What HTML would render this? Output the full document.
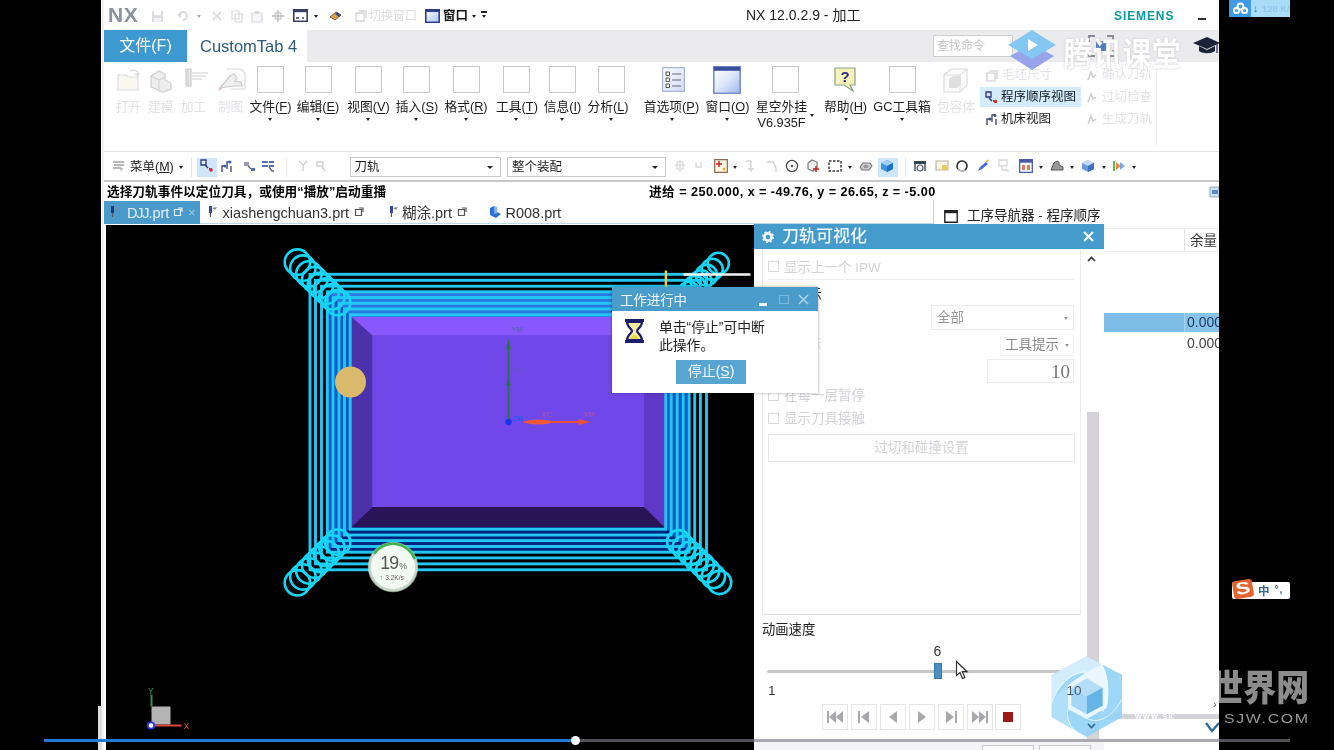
<!DOCTYPE html>
<html lang="zh-CN">
<head>
<meta charset="utf-8">
<title>NX 12.0.2.9 - 加工</title>
<style>
*{box-sizing:border-box;margin:0;padding:0}
html,body{width:1334px;height:750px;overflow:hidden;background:#000}
body{position:relative;filter:blur(.45px);font-family:"Liberation Sans","Noto Sans CJK SC",sans-serif;font-size:12px;color:#1a1a1a}
.abs{position:absolute}
#win{position:absolute;left:104px;top:0;width:1115px;height:750px;background:#fff;overflow:hidden}
#lstrip{position:absolute;left:100.5px;top:0;width:5px;height:750px;background:#f2f2f2}
/* title bar */
#title{position:absolute;left:0;top:0;width:1115px;height:30px;background:#fff}
#tabbar{position:absolute;left:0;top:30px;width:1115px;height:32px;background:#ebebed}
#ribbon{position:absolute;left:0;top:62px;width:1115px;height:89px;background:#fff}
#toolbar{position:absolute;left:0;top:151px;width:1115px;height:31px;background:#fff;border-top:1px solid #e4e4e4;border-bottom:2px solid #c9c9c9}
#status{position:absolute;left:0;top:182px;width:1115px;height:19px;background:#fff}
#doctabs{position:absolute;left:0;top:201px;width:1115px;height:23px;background:#fff}
#view{position:absolute;left:1.5px;top:224.5px;width:648.5px;height:526px;background:#000;overflow:hidden}

/* title */
#nx{position:absolute;left:4px;top:3px;font-weight:bold;font-size:21px;color:#8b939d;letter-spacing:0.5px;line-height:24px}
.fic{position:absolute;opacity:.22}
#title svg,#title .tris{margin-top:1px}
#ttl{position:absolute;left:642px;top:6px;font-size:14px;line-height:18px;color:#222;white-space:nowrap}
#siem{position:absolute;left:1010px;top:9px;font-size:12px;line-height:14px;font-weight:bold;color:#0b9a9c;letter-spacing:.9px}
#mini{position:absolute;left:1094px;top:18px;width:8px;height:2px;background:#333}
.tri{position:absolute;width:0;height:0;border-left:3px solid transparent;border-right:3px solid transparent;border-top:3px solid #222}
.tris{position:absolute;width:0;height:0;border-left:2.5px solid transparent;border-right:2.5px solid transparent;border-top:3px solid #222}
#ftab{position:absolute;left:0;top:0;width:83px;height:32px;background:#3d99cf;color:#fff;font-size:16px;line-height:31px;text-align:center}
#ctab{position:absolute;left:83px;top:0;width:120px;height:32px;background:#fff;color:#2b5c7c;font-size:16.5px;line-height:32px;padding-left:13px;white-space:nowrap}
#srch{position:absolute;left:829px;top:5px;width:80px;height:22px;background:#fff;border:1px solid #cfcfcf;color:#c4c4c4;font-size:12px;line-height:20px;padding-left:3px}
#txkt{position:absolute;left:1063.5px;top:33.5px;font-size:29px;line-height:38px;color:#fff;font-weight:700;white-space:nowrap;letter-spacing:.4px;text-shadow:0 0 2px #c0c0c8;transform:scaleY(1.12);transform-origin:0 0}

/* ribbon */
.rb{position:absolute;top:4px;width:27px;height:27px;border:1px solid #c9c9c9;background:#fff}
.rl{position:absolute;top:36px;font-size:12.75px;line-height:18px;color:#1c1c1c;white-space:nowrap;transform:translateX(-50%);text-align:center}
.rl u{text-decoration-thickness:1px;text-underline-offset:1.5px}
.rf{color:#e2e2e5}
.rt{position:absolute;top:56px;width:0;height:0;border-left:2.5px solid transparent;border-right:2.5px solid transparent;border-top:3px solid #222;margin-left:-2.5px}
.sm{position:absolute;font-size:12.5px;line-height:18px;white-space:nowrap;color:#1c1c1c}
.smf{color:#e4e4e8}

/* toolbar */
.dd{position:absolute;top:5px;height:20px;border:1px solid #c8c8c8;background:#fff;font-size:12.5px;line-height:18px;padding-left:4px;color:#1c1c1c}
.dd i{position:absolute;right:7px;top:8px;width:0;height:0;border-left:3px solid transparent;border-right:3px solid transparent;border-top:3.5px solid #222}
.tb{position:absolute;top:7px}
.tt{position:absolute;top:14px;width:0;height:0;border-left:2.5px solid transparent;border-right:2.5px solid transparent;border-top:3px solid #222}
.sel{position:absolute;top:6px;height:19px;background:#cfe6f8}
.vs{position:absolute;top:6px;width:1px;height:19px;background:#e6e6e6}
#status div{position:absolute;top:1px;font-weight:bold;font-size:12.7px;line-height:18px;color:#000;white-space:nowrap}
.dt{position:absolute;top:0;height:23px;font-size:14.5px;line-height:24px;color:#333;white-space:nowrap}

/* dialog */
#dlg{position:absolute;left:650px;top:224px;width:350px;height:526px;background:#fff}
#dlgh{position:absolute;left:0;top:0;width:350px;height:25px;background:#459bcb;color:#eaf4fb;font-size:17px;line-height:25px;font-weight:500;padding-left:28px;white-space:nowrap}
.dl{position:absolute;font-size:13.5px;line-height:18px;color:#d2d2d6;white-space:nowrap}
.cb{position:absolute;width:11px;height:11px;border:1px solid #dadade;background:#fff}
.fld{position:absolute;border:1px solid #ececee;background:#fff;color:#8a8a8e;font-size:14.5px;white-space:nowrap}
.pb{position:absolute;top:480px;width:26px;height:26px;border:1px solid #e6e6e8;background:#fff}
/* nav */
#nav{position:absolute;left:829px;top:200px;width:286px;height:550px;background:#fff;border-left:1px solid #d0d0d0}
/* progress */
#prog{position:absolute;left:508px;top:287px;width:206px;height:106px;background:#fff;box-shadow:0 0 3px rgba(0,0,0,.35)}
#progh{position:absolute;left:0;top:0;width:206px;height:24px;background:#4a9ccb;color:#f0f7fc;font-size:13.4px;line-height:27px;padding-left:8px;white-space:nowrap}
#stopb{position:absolute;left:64px;top:73px;width:70px;height:24px;background:#58a5d1;color:#f2f8fc;font-size:14px;line-height:23px;text-align:center}
</style>
</head>
<body>
<div id="lstrip"></div>
<div class="abs" style="left:97.500px;top:706px;width:4px;height:44px;background:#dcdcdc"></div>
<div id="win">
  <div id="title">
    <div id="nx">NX</div>
    <svg class="fic" style="left:47px;top:9px" width="13" height="13" viewBox="0 0 13 13"><path d="M1 1h11v11H1z" fill="#667"/><path d="M3 1h7v4H3z" fill="#fff"/><path d="M3 8h7v4H3z" fill="#ccd"/></svg>
    <svg class="fic" style="left:73px;top:9px" width="12" height="12" viewBox="0 0 12 12"><path d="M2 6a4 4 0 1 1 4 4" fill="none" stroke="#556" stroke-width="1.8"/><path d="M0 4l3 4 2-4z" fill="#556"/></svg>
    <div class="tris" style="left:93px;top:14px;opacity:.4"></div>
    <svg class="fic" style="left:107px;top:9px" width="12" height="12" viewBox="0 0 12 12"><path d="M2 2l8 8M10 2l-8 8" stroke="#556" stroke-width="1.6"/></svg>
    <svg class="fic" style="left:127px;top:9px" width="12" height="13" viewBox="0 0 12 13"><path d="M1 1h7v8H1zM4 4h7v8H4z" fill="#fff" stroke="#556" stroke-width="1.2"/></svg>
    <svg class="fic" style="left:147px;top:9px" width="12" height="13" viewBox="0 0 12 13"><path d="M1 3h10v9H1z" fill="#dde" stroke="#556" stroke-width="1.2"/><path d="M4 1h4v3H4z" fill="#556"/></svg>
    <svg class="fic" style="left:167px;top:8px;opacity:.4" width="14" height="14" viewBox="0 0 14 14"><path d="M7 1v12M1 7h12" stroke="#556" stroke-width="1.4"/><path d="M4 4h6v6H4z" fill="none" stroke="#556"/></svg>
    <svg class="abs" style="left:189px;top:8px" width="15" height="13" viewBox="0 0 15 13"><path d="M.8.8h13.4v11.4H.8z" fill="#fff" stroke="#3a3f66" stroke-width="1.6"/><path d="M.8.8h13.4v2.4H.8z" fill="#3a3f66"/><path d="M3 9h3M9 9h2" stroke="#3a3f66" stroke-width="1.5"/></svg>
    <div class="tris" style="left:210px;top:14px"></div>
    <svg class="abs" style="left:225px;top:9px" width="13" height="11" viewBox="0 0 13 11"><path d="M1 7l6-5 5 3-6 5z" fill="#d9a24a" stroke="#5a4a3a" stroke-width=".8"/><path d="M8 2l4 3-2 2-4-3z" fill="#3a4a8a"/></svg>
    <svg class="fic" style="left:251px;top:9px;opacity:.25" width="12" height="12" viewBox="0 0 12 12"><path d="M1 3h8v8H1z" fill="none" stroke="#556" stroke-width="1.3"/><path d="M4 1h7v7" fill="none" stroke="#556" stroke-width="1.3"/></svg>
    <div class="abs" style="left:265px;top:8px;font-size:12px;line-height:16px;color:#dcdce0;white-space:nowrap">切换窗口</div>
    <svg class="abs" style="left:321px;top:8px" width="15" height="14" viewBox="0 0 15 14"><defs><linearGradient id="wg" x1="0" y1="0" x2="1" y2="1"><stop offset="0" stop-color="#fff"/><stop offset="1" stop-color="#a8c4f0"/></linearGradient></defs><path d="M.8.8h13.4v12.4H.8z" fill="url(#wg)" stroke="#2f3f8f" stroke-width="1.6"/><path d="M.8.8h13.4v2.2H.8z" fill="#2f3f8f"/></svg>
    <div class="abs" style="left:339px;top:7.500px;font-size:12.500px;line-height:17px;color:#111;font-weight:bold;white-space:nowrap">窗口</div>
    <div class="tris" style="left:368px;top:14px"></div>
    <div class="abs" style="left:377px;top:11px;width:6px;height:1.5px;background:#222"></div>
    <div class="tris" style="left:377.5px;top:14px"></div>
    <div id="ttl">NX 12.0.2.9 - 加工</div>
    <div id="siem">SIEMENS</div>
    <div id="mini"></div>
  </div>
  <div id="tabbar">
    <div id="ftab">文件(F)</div>
    <div id="ctab">CustomTab 4</div>
    <div id="srch">查找命令</div>
    <svg class="abs" style="left:983px;top:4px" width="28" height="24" viewBox="0 0 28 24"><path d="M2 8V2h6M20 2h6v6M26 16v6h-6M8 22H2v-6" fill="none" stroke="#8a8a94" stroke-width="2"/><path d="M9 7h10v10H9z" fill="#4a7ab8"/></svg>
    <svg class="abs" style="left:1088px;top:6px" width="28" height="20" viewBox="0 0 28 20"><path d="M1 7l14-6 13 6-13 6z" fill="#1c2238"/><path d="M7 10v5c4 3 12 3 16 0v-5l-8 4z" fill="#1c2238"/><path d="M25 8v9" stroke="#5a4a8a" stroke-width="1.5"/></svg>
  </div>
  <div id="ribbon">
    <svg class="abs" style="left:12px;top:5px;opacity:.22" width="26" height="26" viewBox="0 0 26 26"><path d="M2 8h8l2 2h10v13H2z" fill="#e8e0c0" stroke="#666" stroke-width="1.2"/><path d="M14 4c4-2 8 0 9 3l-3 0 3 3" fill="none" stroke="#666" stroke-width="1.5"/></svg>
    <svg class="abs" style="left:44px;top:5px;opacity:.3" width="26" height="26" viewBox="0 0 26 26"><path d="M3 9l8-5 6 3v6l6 3v6l-8 3-12-5z" fill="#c8c8cc" stroke="#666" stroke-width="1.2"/><path d="M3 9l8 4v12M11 13l6-3" fill="none" stroke="#666" stroke-width="1"/></svg>
    <svg class="abs" style="left:78px;top:5px;opacity:.3" width="28" height="26" viewBox="0 0 28 26"><path d="M4 2h5v17H4z" fill="#bbb" stroke="#555" stroke-width="1.2"/><path d="M6 2v17" stroke="#555"/><path d="M10 6h16M10 9h14M10 12h10" stroke="#667" stroke-width="1.2"/></svg>
    <svg class="abs" style="left:113px;top:4px;opacity:.3" width="30" height="28" viewBox="0 0 30 28"><path d="M10 3h14l4 4v16H14" fill="#f4f4f4" stroke="#888" stroke-width="1.2"/><path d="M3 22l10-12 4-2 3 4-2 3 6 1 1 4-9 0z" fill="#ccc" stroke="#555" stroke-width="1.2"/><path d="M2 24l3-3" stroke="#a33" stroke-width="2"/></svg>
    <div class="rl rf" style="left:24.5px">打开</div>
    <div class="rl rf" style="left:56.5px">建模</div>
    <div class="rl rf" style="left:89.5px">加工</div>
    <div class="rl rf" style="left:126.5px">制图</div>
    <div class="rb" style="left:153px"></div>
    <div class="rl" style="left:166.5px">文件(<u>F</u>)</div>
    <div class="rt" style="left:166.5px"></div>
    <div class="rb" style="left:201px"></div>
    <div class="rl" style="left:214px">编辑(<u>E</u>)</div>
    <div class="rt" style="left:214.5px"></div>
    <div class="rb" style="left:251px"></div>
    <div class="rl" style="left:264.5px">视图(<u>V</u>)</div>
    <div class="rt" style="left:264.5px"></div>
    <div class="rb" style="left:299px"></div>
    <div class="rl" style="left:313px">插入(<u>S</u>)</div>
    <div class="rt" style="left:312.5px"></div>
    <div class="rb" style="left:348.5px"></div>
    <div class="rl" style="left:362px">格式(<u>R</u>)</div>
    <div class="rt" style="left:362.0px"></div>
    <div class="rb" style="left:399px"></div>
    <div class="rl" style="left:413px">工具(<u>T</u>)</div>
    <div class="rt" style="left:412.5px"></div>
    <div class="rb" style="left:445px"></div>
    <div class="rl" style="left:458.5px">信息(<u>I</u>)</div>
    <div class="rt" style="left:458.5px"></div>
    <div class="rb" style="left:494px"></div>
    <div class="rl" style="left:504px">分析(<u>L</u>)</div>
    <div class="rt" style="left:507.5px"></div>
    <svg class="abs" style="left:558px;top:5px" width="23" height="25" viewBox="0 0 23 25"><defs><linearGradient id="pg" x1="0" y1="0" x2="1" y2="1"><stop offset="0" stop-color="#fff"/><stop offset="1" stop-color="#d0daf4"/></linearGradient></defs><path d="M.6.6h21.8v23.8H.6z" fill="url(#pg)" stroke="#aab4d8" stroke-width="1.2"/><path d="M4 5h3.5v3.500H4zM4 11h3.500v3.500H4zM4 17h3.500v3.500H4z" fill="#fff" stroke="#555" stroke-width="1"/><path d="M10 7h9M10 13h9M10 19h9" stroke="#667" stroke-width="1.2"/></svg>
    <div class="rl" style="left:567.5px">首选项(<u>P</u>)</div>
    <div class="rt" style="left:568px"></div>
    <svg class="abs" style="left:609px;top:4px" width="28" height="28" viewBox="0 0 28 28"><defs><linearGradient id="wg2" x1="0" y1="0" x2="1" y2="1"><stop offset="0" stop-color="#fff"/><stop offset=".5" stop-color="#dfe8fa"/><stop offset="1" stop-color="#9ab8ee"/></linearGradient></defs><path d="M.8.8h26.400v26.400H.8z" fill="url(#wg2)" stroke="#7a8ed0" stroke-width="1.6"/><path d="M.8.8h26.400v4H.8z" fill="#3a4f9f"/></svg>
    <div class="rl" style="left:623.5px">窗口(<u>O</u>)</div>
    <div class="rt" style="left:623px"></div>
    <div class="rb" style="left:667.5px"></div>
    <div class="rl" style="left:677.5px">星空外挂</div>
    <div class="rl" style="left:677.5px;top:52px">V6.935F</div>
    <div class="rt" style="left:708px;top:52px"></div>
    <svg class="abs" style="left:730px;top:5px" width="24" height="26" viewBox="0 0 24 26"><path d="M1 1h20v17h-5l3 6-9-6H1z" fill="#f6f2b8" stroke="#8aa088" stroke-width="1.2"/><text x="11" y="15" font-family="Liberation Sans, sans-serif" font-weight="bold" font-size="15" fill="#2a2a8a" text-anchor="middle">?</text></svg>
    <div class="rl" style="left:741.5px">帮助(<u>H</u>)</div>
    <div class="rt" style="left:742px"></div>
    <div class="rb" style="left:784.5px"></div>
    <div class="rl" style="left:798px">GC工具箱</div>
    <div class="rt" style="left:798px"></div>
    <svg class="abs" style="left:838px;top:5px;opacity:.3" width="27" height="27" viewBox="0 0 27 27"><path d="M2 8l7-6h16v16l-7 7H2z" fill="#f4f4f4" stroke="#888" stroke-width="1.2"/><path d="M2 8h16v17M18 8l7-6" fill="none" stroke="#888"/><path d="M7 12l4-3h8v8l-4 4H7z" fill="#999"/></svg>
    <div class="rl rf" style="left:852px">包容体</div>
    <div class="abs" style="left:876px;top:25px;width:101px;height:20px;background:#d3ebfb"></div>
    <svg class="abs" style="left:882px;top:8px;opacity:.3" width="12" height="12" viewBox="0 0 12 12"><path d="M1 3h8v8H1zM3 1h8v8" fill="none" stroke="#556" stroke-width="1.2"/></svg>
    <div class="sm smf" style="left:898px;top:4px">毛坯尺寸</div>
    <svg class="abs" style="left:881px;top:29px" width="14" height="13" viewBox="0 0 14 13"><path d="M1 1h5v5H1z" fill="#dde" stroke="#2a3a7a" stroke-width="1.3"/><path d="M4 7l3 3M8 10h3" stroke="#2a3a7a" stroke-width="1.5"/><circle cx="10.500" cy="10.500" r="1.800" fill="#c33"/></svg>
    <div class="sm" style="left:897px;top:26px;color:#101820">程序顺序视图</div>
    <svg class="abs" style="left:881px;top:51px" width="14" height="13" viewBox="0 0 14 13"><path d="M2 12V6h3M7 9V2h3M11 12V6" fill="none" stroke="#4a4a6a" stroke-width="1.4"/><circle cx="5" cy="6" r="1.500" fill="#357"/><circle cx="10" cy="2.500" r="1.500" fill="#357"/></svg>
    <div class="sm" style="left:897px;top:48px">机床视图</div>
    <div class="sm smf" style="left:998px;top:3px">确认刀轨</div>
    <div class="sm smf" style="left:998px;top:26px">过切检查</div>
    <div class="sm smf" style="left:998px;top:48px">生成刀轨</div>
    <svg class="abs" style="left:982px;top:8px;opacity:.3" width="12" height="12" viewBox="0 0 12 12"><path d="M2 10l3-8 2 5 3-2" fill="none" stroke="#556" stroke-width="1.5"/></svg>
    <svg class="abs" style="left:982px;top:30px;opacity:.3" width="12" height="12" viewBox="0 0 12 12"><path d="M2 10l3-8 2 5 3-2" fill="none" stroke="#556" stroke-width="1.5"/></svg>
    <svg class="abs" style="left:982px;top:52px;opacity:.3" width="12" height="12" viewBox="0 0 12 12"><path d="M2 10l3-8 2 5 3-2" fill="none" stroke="#556" stroke-width="1.5"/></svg>
    <div class="abs" style="left:1052px;top:2px;width:1px;height:82px;background:#efeff1"></div>
  </div>
  <div id="toolbar">
    <svg class="tb" style="left:8px;opacity:0.8" width="14" height="14" viewBox="0 0 14 14"><path d="M1 3h11M2 6h10M1 9h8" stroke="#888" stroke-width="1.3"/><path d="M6 7l6 3-3 1 1 3z" fill="#aaa"/></svg>
    <div class="abs" style="left:26px;top:6px;font-size:12.5px;line-height:18px;white-space:nowrap;color:#222">菜单(<u>M</u>)</div>
    <div class="tt" style="left:75px"></div>
    <div class="vs" style="left:87px"></div>
    <div class="sel" style="left:93px;width:20px"></div>
    <svg class="tb" style="left:96px" width="14" height="14" viewBox="0 0 14 14"><path d="M1 1h5v5H1z" fill="#e8eefc" stroke="#2a3a8a" stroke-width="1.3"/><path d="M5 6l3 3M9 10h3" stroke="#2a3a8a" stroke-width="1.4"/><circle cx="11" cy="11" r="1.800" fill="#d24"/></svg>
    <svg class="tb" style="left:116px" width="14" height="14" viewBox="0 0 14 14"><path d="M2 13V7h3M7 10V3h3M11 13V7" fill="none" stroke="#4a4a7a" stroke-width="1.4"/><circle cx="5" cy="7" r="1.500" fill="#36a"/><circle cx="10" cy="3" r="1.500" fill="#36a"/></svg>
    <svg class="tb" style="left:138px;opacity:0.85" width="14" height="14" viewBox="0 0 14 14"><path d="M2 3h5v4H2z" fill="#88a" /><path d="M6 7l3 3" stroke="#446" stroke-width="1.300"/><path d="M9 9h4v3H9z" fill="#35a"/></svg>
    <svg class="tb" style="left:157px;opacity:0.85" width="14" height="14" viewBox="0 0 14 14"><path d="M1 3h6M8 3h5M1 7h6M8 7h5" stroke="#35a" stroke-width="2"/><path d="M8 8l3 4h2" stroke="#446" stroke-width="1.300" fill="none"/></svg>
    <div class="vs" style="left:182px"></div>
    <svg class="tb" style="left:193px;opacity:0.3" width="12" height="14" viewBox="0 0 12 14"><path d="M2 2l4 4 4-4M6 6v6" fill="none" stroke="#667" stroke-width="1.4"/></svg>
    <svg class="tb" style="left:211px;opacity:0.3" width="12" height="14" viewBox="0 0 12 14"><path d="M2 3h6v4H2zM7 8l3 4" fill="none" stroke="#667" stroke-width="1.4"/></svg>
    <div class="dd" style="left:245.500px;width:151px">刀轨<i></i></div>
    <div class="dd" style="left:403px;width:159px">整个装配<i></i></div>
    <svg class="tb" style="left:570px;opacity:0.22" width="12" height="14" viewBox="0 0 12 14"><path d="M6 1v12M1 6h10M3 3h6v7H3z" fill="none" stroke="#667" stroke-width="1.3"/></svg>
    <svg class="tb" style="left:590px;opacity:0.25" width="10" height="12" viewBox="0 0 10 12"><path d="M2 3v5h5V3" fill="none" stroke="#667" stroke-width="1.3"/></svg>
    <svg class="tb" style="left:610px" width="14" height="14" viewBox="0 0 14 14"><path d="M.7.7h12.600v12.600H.7z" fill="#fdf6e0" stroke="#8a6a4a" stroke-width="1.2"/><path d="M5 2v6M2 5h6" stroke="#c22" stroke-width="1.5"/><circle cx="10" cy="10" r="1.500" fill="#db4"/></svg>
    <div class="tt" style="left:629px"></div>
    <svg class="tb" style="left:640px;opacity:0.3" width="12" height="14" viewBox="0 0 12 14"><path d="M2 3c4-3 7 0 4 3M7 6v7M4 10h6" fill="none" stroke="#667" stroke-width="1.3"/></svg>
    <svg class="tb" style="left:662px;opacity:0.3" width="12" height="14" viewBox="0 0 12 14"><path d="M1 3h6l3 6v4" fill="none" stroke="#667" stroke-width="1.4"/></svg>
    <svg class="tb" style="left:681px" width="14" height="14" viewBox="0 0 14 14"><circle cx="7" cy="7" r="5.600" fill="#fff" stroke="#444" stroke-width="1.2"/><circle cx="7" cy="7" r="1.200" fill="#444"/></svg>
    <svg class="tb" style="left:702px" width="14" height="14" viewBox="0 0 14 14"><path d="M2 4l4-3 5 2v6l-4 3-5-2z" fill="#eee" stroke="#777" stroke-width="1.100"/><path d="M10 7v6M7 10h6" stroke="#c22" stroke-width="1.500"/></svg>
    <svg class="tb" style="left:724px" width="14" height="14" viewBox="0 0 14 14"><path d="M1 2h12v10H1z" fill="none" stroke="#333" stroke-width="1.400" stroke-dasharray="2.500 1.500"/></svg>
    <div class="tt" style="left:744px"></div>
    <svg class="tb" style="left:755px" width="14" height="14" viewBox="0 0 14 14"><path d="M1 8l3-4h7l2 3-3 4H3z" fill="#ccc" stroke="#777" stroke-width="1.100"/><ellipse cx="7" cy="7.500" rx="2.500" ry="1.800" fill="#999"/></svg>
    <div class="sel" style="left:774px;width:20px"></div>
    <svg class="tb" style="left:776px" width="14" height="14" viewBox="0 0 14 14"><path d="M1 4l6-3 6 3v6l-6 3-6-3z" fill="#3d93e0"/><path d="M1 4l6 3 6-3-6-3z" fill="#9cd0fa"/><path d="M7 7v6l6-3V4z" fill="#1f6fc4"/></svg>
    <div class="vs" style="left:801px"></div>
    <svg class="tb" style="left:809px" width="14" height="14" viewBox="0 0 14 14"><path d="M1 2h12v3H1z" fill="#345"/><path d="M2 5v7M12 5v7" stroke="#345" stroke-width="1.300"/><circle cx="7" cy="9" r="3" fill="none" stroke="#557" stroke-width="1.200"/></svg>
    <svg class="tb" style="left:831px" width="14" height="14" viewBox="0 0 14 14"><path d="M1 2h12v9H1z" fill="#fbf6e6" stroke="#b9b0a0" stroke-width="1.100"/><path d="M7 6h5v5H7z" fill="#e8c860"/></svg>
    <svg class="tb" style="left:851px" width="14" height="14" viewBox="0 0 14 14"><path d="M3 10a5 5 0 1 1 7 1" fill="none" stroke="#333" stroke-width="1.600"/><path d="M3 10a5 5 0 0 0 7 1" fill="none" stroke="#aaa" stroke-width="1.600"/></svg>
    <svg class="tb" style="left:872px" width="14" height="14" viewBox="0 0 14 14"><path d="M2 12l2-4 6-5 2 2-6 5z" fill="#4a6ad8"/><path d="M10 3l2-2" stroke="#da4" stroke-width="1.500"/></svg>
    <svg class="tb" style="left:893px;opacity:0.3" width="14" height="14" viewBox="0 0 14 14"><path d="M2 1h8v6H2zM5 7v4h6v2" fill="none" stroke="#778" stroke-width="1.300"/></svg>
    <svg class="tb" style="left:915px" width="14" height="14" viewBox="0 0 14 14"><path d="M.7.700h12.600v12.600H.7z" fill="#fff" stroke="#4a5aa8" stroke-width="1.300"/><path d="M.7.700h12.600v3H.7z" fill="#4a5aa8"/><path d="M3 6h3v5H3zM8 6h3v5H8z" fill="#e07a5a"/></svg>
    <div class="tt" style="left:935px"></div>
    <svg class="tb" style="left:946px" width="14" height="14" viewBox="0 0 14 14"><path d="M1 11l3-7c3-3 6-2 5 2l4 2v3z" fill="#999" stroke="#555" stroke-width="1"/></svg>
    <div class="tt" style="left:966px"></div>
    <svg class="tb" style="left:977px" width="14" height="14" viewBox="0 0 14 14"><path d="M1 4l6-3 6 3v6l-6 3-6-3z" fill="#6a9ae0"/><path d="M1 4l6 3 6-3-6-3z" fill="#c4dcf8"/><path d="M7 7v6l6-3V4z" fill="#3f6fc0"/></svg>
    <div class="tt" style="left:998px"></div>
    <svg class="tb" style="left:1008px" width="14" height="14" viewBox="0 0 14 14"><path d="M2 2v10" stroke="#2a2" stroke-width="1.500"/><path d="M4 3l5 4-5 4z" fill="#e84"/><path d="M8 3l5 4-5 4z" fill="#59d" opacity=".8"/></svg>
    <div class="tt" style="left:1028px"></div>
  </div>
  <div id="status">
    <div style="left:3px">选择刀轨事件以定位刀具，或使用“播放”启动重播</div>
    <div style="left:545px;letter-spacing:.42px">进给 = 250.000, x = -49.76, y = 26.65, z = -5.00</div>
    <svg class="abs" style="left:1105px;top:4px" width="10" height="12" viewBox="0 0 10 12"><path d="M1 1h9v10H1z" fill="#cfe0f4" stroke="#9ab" stroke-width="1"/><path d="M3 4h6v4H3z" fill="#5a8ac8"/></svg>
  </div>
  <div id="doctabs">
    <div class="abs" style="left:0;top:22px;width:830px;height:1px;background:#b9d9ee"></div>
    <div class="dt" style="left:0;width:96px;background:#4a9bcb;color:#e6f2fb"></div>
    <svg class="abs" style="left:4px;top:4px" width="12" height="14" viewBox="0 0 12 14"><path d="M3 1h3v7H3z" fill="#27357a"/><path d="M6 3l5-1-2 3z" fill="#8a8a9a"/><path d="M4.500 8v4" stroke="#555" stroke-width="1.200"/></svg>
    <div class="dt" style="left:23px;color:#e4f0fa"><span style="letter-spacing:-1.2px">DJJ</span>.prt</div>
    <svg class="abs" style="left:69px;top:6px" width="10" height="10" viewBox="0 0 10 10"><path d="M1.500 2.500h6v6h-6z" fill="none" stroke="#e8f2fa" stroke-width="1.200"/><path d="M5 1h4v4" fill="none" stroke="#e8f2fa" stroke-width="1.200"/></svg>
    <div class="dt" style="left:84px;color:#9fc8e4;font-size:13px">×</div>
    <svg class="abs" style="left:102px;top:4px" width="12" height="14" viewBox="0 0 12 14"><path d="M3 1h3v7H3z" fill="#3a4a9a"/><path d="M6 3l5-1-2 3z" fill="#8a8a9a"/><path d="M4.500 8v4" stroke="#555" stroke-width="1.200"/></svg>
    <div class="dt" style="left:118.500px">xiashengchuan3.prt</div>
    <svg class="abs" style="left:250px;top:6px" width="10" height="10" viewBox="0 0 10 10"><path d="M1.500 2.500h6v6h-6z" fill="none" stroke="#555" stroke-width="1.200"/><path d="M5 1h4v4" fill="none" stroke="#555" stroke-width="1.200"/></svg>
    <svg class="abs" style="left:283px;top:4px" width="12" height="14" viewBox="0 0 12 14"><path d="M3 1h3v7H3z" fill="#3a4a9a"/><path d="M6 3l5-1-2 3z" fill="#8a8a9a"/><path d="M4.500 8v4" stroke="#555" stroke-width="1.200"/></svg>
    <div class="dt" style="left:298px">糊涂.prt</div>
    <svg class="abs" style="left:353px;top:6px" width="10" height="10" viewBox="0 0 10 10"><path d="M1.500 2.500h6v6h-6z" fill="none" stroke="#555" stroke-width="1.200"/><path d="M5 1h4v4" fill="none" stroke="#555" stroke-width="1.200"/></svg>
    <svg class="abs" style="left:385px;top:4px" width="13" height="14" viewBox="0 0 13 14"><path d="M1 3l4-2v7l3-1 4 2-5 4-6-3z" fill="#2f6fd8"/><path d="M5 1l3 1v6l-3 1z" fill="#7ab0f4"/></svg>
    <div class="dt" style="left:401.500px">R008.prt</div>
  </div>
  <div id="view">
<svg class="abs" style="left:0;top:0" width="648.5" height="526" viewBox="105.500 224.500 648.500 526">
<path d="M326.8 291.3H688.7L664 316.5H351z" fill="#2a78e2"/>
<path d="M326.8 291.3L351 316.5V526.5L326.8 551.7z" fill="#0b5cc6"/>
<path d="M688.7 291.3L664 316.5V526.5L688.7 551.7z" fill="#0b5cc6"/>
<path d="M326.8 551.7L351 526.5H664L688.7 551.7z" fill="#00257c"/>
<path d="M351 316.500H664V526.500H351z" fill="#6a44d6"/>
<path d="M351 316.500H664L643.500 335H372z" fill="#8858fc"/>
<path d="M351 316.500L372 335V506.500L351 526.500z" fill="#4c32aa"/>
<path d="M664 316.500L643.500 335V506.500L664 526.500z" fill="#6038c8"/>
<path d="M351 526.500L372 506.500H643.500L664 526.500z" fill="#2a1458"/>
<path d="M372 335H643.500V506.500H372z" fill="#7048ea"/>
<rect x="309.5" y="273.8" width="396.5" height="295.5" fill="none" stroke="#24c6f4" stroke-width="2.9"/>
<rect x="315" y="279.8" width="384.9" height="283.6" fill="none" stroke="#24c6f4" stroke-width="2.9"/>
<rect x="321" y="285.7" width="373.2" height="271.7" fill="none" stroke="#24c6f4" stroke-width="2.9"/>
<rect x="326.8" y="291.3" width="361.9" height="260.4" fill="none" stroke="#24c6f4" stroke-width="2.9"/>
<rect x="332.5" y="297" width="350.2" height="249.0" fill="none" stroke="#24c6f4" stroke-width="2.9"/>
<rect x="338.5" y="302.8" width="338.2" height="237.3" fill="none" stroke="#24c6f4" stroke-width="2.9"/>
<rect x="344" y="308.5" width="326.7" height="226.0" fill="none" stroke="#24c6f4" stroke-width="2.9"/>
<rect x="349.7" y="314.2" width="315.5" height="214.5" fill="none" stroke="#24c6f4" stroke-width="2.9"/>
<circle cx="296.9" cy="261.6" r="12.7" fill="none" stroke="#14d6f7" stroke-width="2.6"/>
<circle cx="302.4" cy="267.6" r="12.7" fill="none" stroke="#14d6f7" stroke-width="2.6"/>
<circle cx="308.4" cy="273.5" r="12.7" fill="none" stroke="#14d6f7" stroke-width="2.6"/>
<circle cx="314.2" cy="279.1" r="12.7" fill="none" stroke="#14d6f7" stroke-width="2.6"/>
<circle cx="319.9" cy="284.8" r="12.7" fill="none" stroke="#14d6f7" stroke-width="2.6"/>
<circle cx="325.9" cy="290.6" r="12.7" fill="none" stroke="#14d6f7" stroke-width="2.6"/>
<circle cx="331.4" cy="296.3" r="12.7" fill="none" stroke="#14d6f7" stroke-width="2.6"/>
<circle cx="337.1" cy="302.0" r="12.7" fill="none" stroke="#14d6f7" stroke-width="2.6"/>
<circle cx="717.8" cy="262.8" r="10.6" fill="none" stroke="#14d6f7" stroke-width="2.6"/>
<circle cx="711.7" cy="268.8" r="10.6" fill="none" stroke="#14d6f7" stroke-width="2.6"/>
<circle cx="706.0" cy="274.7" r="10.6" fill="none" stroke="#14d6f7" stroke-width="2.6"/>
<circle cx="700.5" cy="280.3" r="10.6" fill="none" stroke="#14d6f7" stroke-width="2.6"/>
<circle cx="694.5" cy="286.0" r="10.6" fill="none" stroke="#14d6f7" stroke-width="2.6"/>
<circle cx="688.5" cy="291.8" r="10.6" fill="none" stroke="#14d6f7" stroke-width="2.6"/>
<circle cx="682.5" cy="297.5" r="10.6" fill="none" stroke="#14d6f7" stroke-width="2.6"/>
<circle cx="677.0" cy="303.2" r="10.6" fill="none" stroke="#14d6f7" stroke-width="2.6"/>
<circle cx="296.9" cy="582.3" r="12.7" fill="none" stroke="#14d6f7" stroke-width="2.6"/>
<circle cx="302.4" cy="576.4" r="12.7" fill="none" stroke="#14d6f7" stroke-width="2.6"/>
<circle cx="308.4" cy="570.4" r="12.7" fill="none" stroke="#14d6f7" stroke-width="2.6"/>
<circle cx="314.2" cy="564.7" r="12.7" fill="none" stroke="#14d6f7" stroke-width="2.6"/>
<circle cx="319.9" cy="559.0" r="12.7" fill="none" stroke="#14d6f7" stroke-width="2.6"/>
<circle cx="325.9" cy="553.1" r="12.7" fill="none" stroke="#14d6f7" stroke-width="2.6"/>
<circle cx="331.4" cy="547.5" r="12.7" fill="none" stroke="#14d6f7" stroke-width="2.6"/>
<circle cx="337.1" cy="541.7" r="12.7" fill="none" stroke="#14d6f7" stroke-width="2.6"/>
<circle cx="719.0" cy="581.9" r="11.7" fill="none" stroke="#14d6f7" stroke-width="2.6"/>
<circle cx="712.9" cy="576.0" r="11.7" fill="none" stroke="#14d6f7" stroke-width="2.6"/>
<circle cx="707.2" cy="570.0" r="11.7" fill="none" stroke="#14d6f7" stroke-width="2.6"/>
<circle cx="701.7" cy="564.3" r="11.7" fill="none" stroke="#14d6f7" stroke-width="2.6"/>
<circle cx="695.7" cy="558.6" r="11.7" fill="none" stroke="#14d6f7" stroke-width="2.6"/>
<circle cx="689.7" cy="552.7" r="11.7" fill="none" stroke="#14d6f7" stroke-width="2.6"/>
<circle cx="683.7" cy="547.1" r="11.7" fill="none" stroke="#14d6f7" stroke-width="2.6"/>
<circle cx="678.2" cy="541.3" r="11.7" fill="none" stroke="#14d6f7" stroke-width="2.6"/>
<path d="M683 274H750" stroke="#f4f4f4" stroke-width="2.6"/>
<path d="M665.400 270V288" stroke="#e8d23a" stroke-width="2.4"/>
<circle cx="350" cy="381.500" r="15.500" fill="#d9b96c"/>
<path d="M508 420V344" stroke="#2f6f50" stroke-width="2"/><path d="M505.500 349L508 338l2.500 11zM505.500 385L508 376l2.500 9z" fill="#2f6f50"/>
<text x="511" y="331" font-size="7.500" fill="#4a6a8a" font-family="Liberation Sans, sans-serif">YM</text>
<text x="513" y="372" font-size="7.500" fill="#5a5aa8" font-family="Liberation Sans, sans-serif">YC</text>
<path d="M523 421.500H585" stroke="#e8503a" stroke-width="2"/><path d="M578 418.500l12 3-12 3z" fill="#e8503a"/>
<ellipse cx="538" cy="421.500" rx="13" ry="2.400" fill="#f05a3a"/>
<text x="541" y="416" font-size="7.500" fill="#c8508a" font-family="Liberation Sans, sans-serif">XC</text>
<text x="583" y="416" font-size="7.500" fill="#c8508a" font-family="Liberation Sans, sans-serif">XM</text>
<circle cx="508" cy="421.500" r="3.200" fill="#1a34e8"/>
<text x="512" y="420" font-size="7.500" font-weight="bold" fill="#2a5af0" font-family="Liberation Sans, sans-serif">ZM</text>
<path d="M151 706H170V724H151z" fill="#b4b4b4"/>
<path d="M151 706V694" stroke="#3a8a4a" stroke-width="2"/>
<text x="147.500" y="693" font-size="8.500" fill="#3a9a5a" font-family="Liberation Sans, sans-serif">Y</text>
<path d="M152 725H181" stroke="#e04a3a" stroke-width="2"/>
<text x="183" y="728.500" font-size="8.500" fill="#e0503a" font-family="Liberation Sans, sans-serif">X</text>
<circle cx="150.500" cy="725" r="3.200" fill="#fff" stroke="#2a3ae0" stroke-width="1.800"/>
</svg>
</div>
  <div id="nav">
    <svg class="abs" style="left:10px;top:10px" width="14" height="13" viewBox="0 0 14 13"><path d="M.8.800h12.400v11.400H.8z" fill="#fff" stroke="#222" stroke-width="1.400"/><path d="M.8.800h12.400v2.400H.8z" fill="#222"/></svg>
    <div class="abs" style="left:33px;top:7px;font-size:13.500px;line-height:18px;color:#222;white-space:nowrap">工序导航器 - 程序顺序</div>
    <div class="abs" style="left:170px;top:28px;width:116px;height:1px;background:#ececec"></div>
    <div class="abs" style="left:170px;top:51px;width:116px;height:1px;background:#ececec"></div>
    <div class="abs" style="left:250px;top:29px;width:1px;height:22px;background:#e4e4e4"></div>
    <div class="abs" style="left:256px;top:32px;font-size:13.500px;line-height:18px;color:#333;white-space:nowrap">余量</div>
    <div class="abs" style="left:170px;top:112.500px;width:116px;height:19px;background:#7dbde6"></div>
    <div class="abs" style="left:250px;top:112.500px;width:36px;height:19px;background:#88c4ea;border-left:1px solid #a4d2f0"></div>
    <div class="abs" style="left:253px;top:113px;font-size:14px;line-height:18px;color:#1a3a5a;white-space:nowrap">0.000</div>
    <div class="abs" style="left:253px;top:133.500px;font-size:14px;line-height:18px;color:#444;white-space:nowrap">0.000</div>
    <div class="abs" style="left:171px;top:513.500px;width:115px;height:5px;background:#d4d4d8;overflow:hidden;color:#fff;font-size:7px;line-height:5px;letter-spacing:1.500px;font-weight:bold;white-space:nowrap;padding-left:30px">WWW.SK</div>
    <div class="abs" style="left:279px;top:498px;font-size:11px;color:#555;line-height:12px">›</div>
    <svg class="abs" style="left:271px;top:522px" width="15" height="11" viewBox="0 0 15 11"><path d="M1 1l6 8 7-8" fill="none" stroke="#2a6a9a" stroke-width="2.200"/></svg>
  </div>
  <div id="dlg">
    <div id="dlgh">刀轨可视化</div>
    <svg class="abs" style="left:8px;top:7px" width="12" height="12" viewBox="0 0 12 12"><circle cx="6" cy="6" r="3.600" fill="none" stroke="#eef6fc" stroke-width="2.600"/><circle cx="6" cy="6" r="5.300" fill="none" stroke="#eef6fc" stroke-width="1.600" stroke-dasharray="2 2.160"/></svg>
    <svg class="abs" style="left:329px;top:7px" width="11" height="11" viewBox="0 0 11 11"><path d="M1 1l9 9M10 1l-9 9" stroke="#f4f9fd" stroke-width="2.200"/></svg>
    <div class="abs" style="left:8px;top:25px;width:1px;height:366px;background:#e9e9eb"></div>
    <div class="abs" style="left:8px;top:390px;width:319px;height:1px;background:#e2e2e4"></div>
    <div class="abs" style="left:326px;top:25px;width:1px;height:366px;background:#ececee"></div>
    <div class="cb" style="left:14px;top:37px"></div><div class="dl" style="left:30px;top:35px">显示上一个 IPW</div>
    <div class="abs" style="left:14px;top:55px;width:306px;height:1px;background:#ededef"></div>
    <div class="dl" style="left:14px;top:62px;color:#333">刀具显示</div>
    <div class="fld" style="left:177px;top:81px;width:143px;height:25px;line-height:23px;padding-left:5px;font-size:13.500px;color:#999">全部</div>
    <div class="tris" style="left:310px;top:93px;opacity:.45"></div>
    <div class="dl" style="left:14px;top:112px;color:#e2e2e4">运动显示</div>
    <div class="fld" style="left:246px;top:110px;width:74px;height:22px;line-height:20px;padding-left:4px;font-size:13.500px;border-color:#f4f4f6">工具提示</div>
    <div class="tris" style="left:311px;top:120px;opacity:.45"></div>
    <div class="fld" style="left:233px;top:135px;width:87px;height:24px;line-height:23px;text-align:right;padding-right:3px;font-family:'Liberation Serif','Noto Serif CJK SC',serif;font-size:19px;color:#777">10</div>
    <div class="cb" style="left:14px;top:166px"></div><div class="dl" style="left:30px;top:163px">在每一层暂停</div>
    <div class="cb" style="left:14px;top:189px"></div><div class="dl" style="left:30px;top:186px">显示刀具接触</div>
    <div class="fld" style="left:14px;top:210px;width:307px;height:28px;line-height:26px;text-align:center;color:#d4d4d8;font-size:13.500px;border-color:#e6e6e8">过切和碰撞设置</div>
    <div class="abs" style="left:330px;top:25px;width:15px;height:501px;background:#fff"></div>
    <svg class="abs" style="left:333px;top:32px" width="9" height="6" viewBox="0 0 9 6"><path d="M1 5l3.500-3.500L8 5" fill="none" stroke="#333" stroke-width="1.600"/></svg>
    <div class="abs" style="left:332.500px;top:188px;width:12.500px;height:327px;background:#d5d3d8"></div>
    <div class="abs" style="left:8px;top:396.500px;font-size:13.300px;line-height:18px;color:#222;white-space:nowrap">动画速度</div>
    <div class="abs" style="left:179.500px;top:418.500px;font-size:14px;line-height:16px;color:#333">6</div>
    <div class="abs" style="left:13px;top:445.500px;width:307px;height:3px;background:#c6c6c6;border-radius:1.500px"></div>
    <div class="abs" style="left:180px;top:438.500px;width:8px;height:16px;background:#4a8ec2;border:1px solid #3a78aa"></div>
    <div class="abs" style="left:14px;top:459px;font-size:13.500px;line-height:16px;color:#333">1</div>
    <div class="pb" style="left:68px"><svg width="26" height="26" viewBox="0 0 26 26" style="position:absolute;left:-1px;top:-1px"><path d="M6 7v12" stroke="#a8a8ac" stroke-width="2"/><path d="M14 7v12l-7-6zM21 7v12l-7-6z" fill="#a8a8ac"/></svg></div>
    <div class="pb" style="left:97px"><svg width="26" height="26" viewBox="0 0 26 26" style="position:absolute;left:-1px;top:-1px"><path d="M8 7v12" stroke="#a8a8ac" stroke-width="2"/><path d="M18 7v12l-8-6z" fill="#a8a8ac"/></svg></div>
    <div class="pb" style="left:126px"><svg width="26" height="26" viewBox="0 0 26 26" style="position:absolute;left:-1px;top:-1px"><path d="M17 7v12l-8-6z" fill="#a8a8ac"/></svg></div>
    <div class="pb" style="left:155px"><svg width="26" height="26" viewBox="0 0 26 26" style="position:absolute;left:-1px;top:-1px"><path d="M9 7v12l8-6z" fill="#a8a8ac"/></svg></div>
    <div class="pb" style="left:184px"><svg width="26" height="26" viewBox="0 0 26 26" style="position:absolute;left:-1px;top:-1px"><path d="M18 7v12" stroke="#a8a8ac" stroke-width="2"/><path d="M8 7v12l8-6z" fill="#a8a8ac"/></svg></div>
    <div class="pb" style="left:213px"><svg width="26" height="26" viewBox="0 0 26 26" style="position:absolute;left:-1px;top:-1px"><path d="M20 7v12" stroke="#a8a8ac" stroke-width="2"/><path d="M5 7v12l7-6zM12 7v12l7-6z" fill="#a8a8ac"/></svg></div>
    <div class="pb" style="left:241px"><svg width="26" height="26" viewBox="0 0 26 26" style="position:absolute;left:-1px;top:-1px"><path d="M8 8h10v10H8z" fill="#a01818"/></svg></div>
    <div class="abs" style="left:0;top:514.500px;width:470px;height:3.500px;background:#c4c4c8"></div>
    <div class="abs" style="left:0;top:518px;width:350px;height:8px;background:#f4f4f6"></div>
    <div class="abs" style="left:228px;top:521px;width:52px;height:10px;border:1px solid #c8c8cc;background:#fafafa"></div>
    <div class="abs" style="left:284.500px;top:521px;width:52px;height:10px;border:1px solid #c8c8cc;background:#fafafa"></div>
    <svg class="abs" style="left:201px;top:436px" width="14" height="20" viewBox="0 0 14 20"><path d="M1.500 1.500v14l3.500-3 2.500 6 2.400-1-2.600-5.800h4.700z" fill="#fff" stroke="#333" stroke-width="1.200"/></svg>
  </div>
  <div id="prog">
    <div id="progh">工作进行中</div>
    <div class="abs" style="left:147px;top:16px;width:8px;height:2.500px;background:#f4f9fd"></div>
    <div class="abs" style="left:167px;top:8px;width:10px;height:9px;border:1px solid #7ab8dc"></div>
    <svg class="abs" style="left:186px;top:7px" width="11" height="11" viewBox="0 0 11 11"><path d="M1 1l9 9M10 1l-9 9" stroke="#a8d0e8" stroke-width="1.600"/></svg>
    <svg class="abs" style="left:12px;top:31px" width="21" height="26" viewBox="0 0 21 26"><path d="M1 1h19v3H1zM1 22h19v3H1z" fill="#1c1c6c"/><path d="M3 4h15c0 5-5 7-5 9s5 4 5 9H3c0-5 5-7 5-9s-5-4-5-9z" fill="#f4ec9a" stroke="#1c1c6c" stroke-width="2.200"/><path d="M6 21c1-3 3-4 4.500-4s3.500 1 4.500 4z" fill="#e8d84a"/></svg>
    <div class="abs" style="left:47px;top:31.500px;font-size:13.800px;line-height:18.300px;color:#222;white-space:nowrap">单击“停止”可中断<br>此操作。</div>
    <div id="stopb">停止(<u>S</u>)</div>
  </div>
  <svg class="abs" style="left:263.300px;top:541.100px" width="52" height="52" viewBox="0 0 50 50">
    <circle cx="25" cy="25" r="24.200" fill="#b9d8c0" opacity=".75"/>
    <circle cx="25" cy="25" r="22.300" fill="#f3faf4" stroke="#c9d6cb" stroke-width="2.200"/>
    <path d="M6.73 12.21A22.300 22.300 0 0 1 45.96 17.37" fill="none" stroke="#3db54c" stroke-width="2.400"/>
    <text x="21.500" y="26.500" text-anchor="middle" font-family="Liberation Sans, sans-serif" font-size="17" fill="#565656" letter-spacing="-.8">19</text>
    <text x="31" y="26.500" font-family="Liberation Sans, sans-serif" font-size="8.500" fill="#565656">%</text>
    <text x="12" y="37.300" font-family="Liberation Sans, sans-serif" font-size="6.500" fill="#3a9a5a">↑</text>
    <text x="17.500" y="37.300" font-family="Liberation Sans, sans-serif" font-size="6.300" fill="#6a5a5a">3.2K/s</text>
  </svg>
</div>
<!-- overlays -->
<svg class="abs" style="left:1007px;top:29px" width="50" height="42" viewBox="0 0 50 42"><path d="M3 27l22-12 22 12-22 14z" fill="#97a4ea"/><path d="M1 16L25 1l24 15-24 14z" fill="#84c7f2"/><path d="M21 10v12l10-6z" fill="#fff"/></svg>
<div id="txkt">腾讯课堂</div>
<div class="abs" style="left:1229px;top:0;width:61px;height:17px;background:#a9dcf6;overflow:hidden">
  <div class="abs" style="left:0;top:0;width:22px;height:17px;background:#3f9be6"></div>
  <svg class="abs" style="left:3px;top:2px" width="17" height="13" viewBox="0 0 17 13"><circle cx="8.500" cy="4.500" r="2.900" fill="none" stroke="#fff" stroke-width="2"/><circle cx="4.500" cy="8.500" r="2.600" fill="none" stroke="#fff" stroke-width="2"/><circle cx="12.500" cy="8.500" r="2.600" fill="none" stroke="#fff" stroke-width="2"/></svg>
  <div class="abs" style="left:24px;top:1px;font-size:10.500px;line-height:14px;color:#3a7ad0;font-weight:bold">↓</div>
  <div class="abs" style="left:33px;top:2px;font-size:9.500px;line-height:14px;color:#8cc0e8;white-space:nowrap">128 K/s</div>
</div>
<div class="abs" style="left:1232px;top:581.500px;width:58px;height:17px;background:#fff;border-radius:2px"></div>
<div class="abs" style="left:1232.500px;top:580px;width:20px;height:18px;background:#e4632c;border-radius:3px;transform:rotate(-9deg)"><div style="color:#fff;font-weight:bold;font-size:17px;line-height:18px;text-align:center;transform:scaleX(1.3)">S</div></div>
<div class="abs" style="left:1258px;top:583.500px;font-size:11.500px;line-height:14px;font-weight:bold;color:#346a9e;white-space:nowrap">中</div>
<div class="abs" style="left:1274.500px;top:583px;font-size:10px;line-height:14px;font-weight:bold;color:#4a6a8a;white-space:nowrap;letter-spacing:1px">°,</div>
<div class="abs" style="left:1199px;top:663.500px;font-size:36.500px;line-height:50px;font-weight:900;color:#8c8c8c;white-space:nowrap;transform:scaleX(.9);transform-origin:100% 0;width:110px;text-align:right;clip-path:inset(0 0 0 10px)">世界网</div>
<div class="abs" style="left:1224px;top:712px;font-size:12.500px;line-height:15px;color:#9a9a9a;white-space:nowrap;letter-spacing:1.300px;transform:scaleX(1.270);transform-origin:0 0">SJW.COM</div>
<svg class="abs" style="left:1040px;top:645px" width="100" height="100" viewBox="0 0 750 750">
  <path d="M350 85L615 225V540L350 690L88 540V225z" fill="#8fd1f7" opacity=".88"/>
  <path d="M350 85L88 225V440C125 310 240 205 345 205L462 142z" fill="#e2f2fd" opacity=".8"/>
  <path d="M88 440V540L262 640C205 570 198 505 210 470V300C160 340 110 390 88 440z" fill="#b4e0fa" opacity=".85"/>
  <path d="M210 300V480L350 555L500 470C520 400 520 250 462 142L345 205z" fill="#fff" opacity=".8"/>
  <path d="M235 320L350 250L470 320L350 385z" fill="#b6ddf8"/>
  <path d="M235 320L350 385V520L235 455z" fill="#a4d6f7"/>
  <path d="M350 385L470 320V455L350 520z" fill="#64b4e6"/>
  <path d="M462 142C522 250 522 400 472 500" stroke="#fff" stroke-width="7" fill="none" opacity=".9"/>
  <path d="M88 440C125 310 240 190 350 205" stroke="#fff" stroke-width="6" fill="none" opacity=".9"/>
  <path d="M210 478C198 560 225 615 268 645" stroke="#fff" stroke-width="6" fill="none" opacity=".9"/>
  <path d="M352 552C450 600 560 520 615 400" stroke="#fff" stroke-width="6" fill="none" opacity=".9"/>
</svg>
<svg class="abs" style="left:1087px;top:722.500px" width="9" height="6" viewBox="0 0 9 6"><path d="M1 1l3.500 3.500L8 1" fill="none" stroke="#2f6a9c" stroke-width="1.700"/></svg>
<div class="abs" style="left:1066.500px;top:683px;font-size:13.500px;line-height:16px;color:#4a5a6a">10</div>
<div class="abs" style="left:44px;top:739px;width:1246px;height:3px;background:rgba(150,150,158,.55)"></div>
<div class="abs" style="left:44px;top:739px;width:531px;height:3px;background:#1e7ad6"></div>
<div class="abs" style="left:570.500px;top:736px;width:9px;height:9px;border-radius:50%;background:#fff"></div>
</body>
</html>
